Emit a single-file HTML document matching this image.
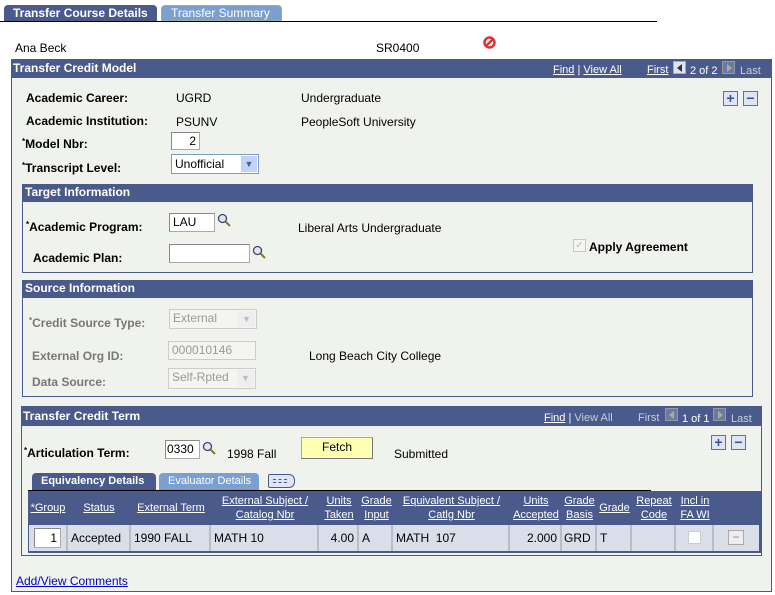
<!DOCTYPE html>
<html><head><style>
*{box-sizing:border-box;margin:0;padding:0}
body{width:775px;height:595px;background:#fff;font-family:"Liberation Sans",Arial,sans-serif;font-size:12px;color:#000;position:relative;overflow:hidden}
.a{position:absolute;white-space:nowrap}
.b{font-weight:bold}
.hd{background:#4a5a8b;color:#fff;font-weight:bold}
.box{position:absolute;border:1px solid #4a5a8b;background:#f0f2ee}
.in{position:absolute;background:#fff;border:1px solid #aaa;border-top-color:#888;border-left-color:#888;font-size:12px;padding:1px 3px}
.dis{color:#999;border-color:#ccc;background:#f4f4f0}
.lnk{color:#fff;text-decoration:underline;font-size:11px}
.pm{position:absolute;width:15px;height:15px;border:1px solid #5b6fb4;background:#dfe5f5;color:#3b4fa0;font-weight:bold;font-size:14px;line-height:12px;text-align:center}
.th{position:absolute;color:#fff;text-decoration:underline;font-size:11px;text-align:center;line-height:14px}
.td{position:absolute;top:525px;height:26px;background:#d9dee8;border-right:2px solid #b8bcc4;line-height:26px;padding:0 3px;font-size:12px}
</style></head><body>
<!-- tabs -->
<div class="a b" style="left:4px;top:5px;width:153px;height:17px;background:#4a5a8b;color:#fff;border-radius:4px 4px 0 0;padding:1px 0 0 9px">Transfer Course Details</div>
<div class="a" style="left:161px;top:5px;width:121px;height:16px;background:#7b9fcf;color:#fff;border-radius:4px 4px 0 0;border:1px solid #9aa;padding:0 0 0 9px">Transfer Summary</div>
<div class="a" style="left:0;top:21px;width:657px;height:1px;background:#000"></div>
<div class="a" style="left:15px;top:41px">Ana Beck</div>
<div class="a" style="left:376px;top:41px">SR0400</div>
<svg class="a" style="left:483px;top:36px" width="13" height="13"><circle cx="6.5" cy="6.5" r="5" fill="none" stroke="#d33" stroke-width="2.5"/><line x1="3" y1="10" x2="10" y2="3" stroke="#d33" stroke-width="2.5"/></svg>
<!-- main box -->
<div class="box" style="left:11px;top:59px;width:761px;height:533px"></div>
<div class="a hd" style="left:11px;top:59px;width:761px;height:19px;padding:2px 0 0 2px">Transfer Credit Model</div>
<div class="a" style="left:553px;top:64px;color:#fff;font-size:11px"><span style="text-decoration:underline">Find</span> | <span style="text-decoration:underline">View All</span></div>
<div class="a" style="left:647px;top:64px;color:#fff;font-size:11px"><span style="text-decoration:underline">First</span></div>
<div class="a" style="left:673px;top:61px;width:13px;height:13px;background:#dfe5f5;border:1px solid #aab"><div style="margin:2px 0 0 3px;width:0;height:0;border-top:4px solid transparent;border-bottom:4px solid transparent;border-right:5px solid #333"></div></div>
<div class="a" style="left:690px;top:65px;color:#fff;font-size:11px">2 of 2</div>
<div class="a" style="left:722px;top:61px;width:13px;height:13px;background:#6b7aa5;border:1px solid #999"><div style="margin:2px 0 0 4px;width:0;height:0;border-top:4px solid transparent;border-bottom:4px solid transparent;border-left:5px solid #aaa"></div></div>
<div class="a" style="left:740px;top:65px;color:#ccd;font-size:11px">Last</div>
<div class="pm" style="left:723px;top:91px">+</div><div class="pm" style="left:743px;top:91px">−</div>
<div class="a b" style="left:26px;top:91px">Academic Career:</div>
<div class="a" style="left:176px;top:91px">UGRD</div>
<div class="a" style="left:301px;top:91px">Undergraduate</div>
<div class="a b" style="left:26px;top:114px">Academic Institution:</div>
<div class="a" style="left:176px;top:115px">PSUNV</div>
<div class="a" style="left:301px;top:115px">PeopleSoft University</div>
<div class="a b" style="left:22px;top:137px"><span style="font-size:8px;vertical-align:top">*</span>Model Nbr:</div>
<div class="in" style="left:171px;top:132px;width:29px;height:18px;text-align:right">2</div>
<div class="a b" style="left:22px;top:161px"><span style="font-size:8px;vertical-align:top">*</span>Transcript Level:</div>
<div class="in" style="left:171px;top:154px;width:88px;height:20px;border-color:#7f9db9;padding-top:2px">Unofficial<div style="position:absolute;right:1px;top:1px;width:16px;height:16px;background:#c1d3fb;color:#4d6185;font-size:9px;text-align:center;line-height:16px">&#9660;</div></div>
<!-- target -->
<div class="box" style="left:22px;top:184px;width:731px;height:89px"></div>
<div class="a hd" style="left:22px;top:184px;width:731px;height:18px;padding:1px 0 0 3px">Target Information</div>
<div class="a b" style="left:26px;top:220px"><span style="font-size:8px;vertical-align:top">*</span>Academic Program:</div>
<div class="in" style="left:169px;top:213px;width:46px;height:19px">LAU</div>
<svg class="a" style="left:217px;top:213px" width="14" height="14"><circle cx="5.5" cy="5.5" r="4" fill="#dde8f5" stroke="#446" stroke-width="1.3"/><line x1="8.5" y1="8.5" x2="13" y2="13" stroke="#873" stroke-width="2"/></svg>
<div class="a" style="left:298px;top:221px">Liberal Arts Undergraduate</div>
<div class="a b" style="left:33px;top:251px">Academic Plan:</div>
<div class="in" style="left:169px;top:244px;width:81px;height:19px"></div>
<svg class="a" style="left:252px;top:245px" width="14" height="14"><circle cx="5.5" cy="5.5" r="4" fill="#dde8f5" stroke="#446" stroke-width="1.3"/><line x1="8.5" y1="8.5" x2="13" y2="13" stroke="#873" stroke-width="2"/></svg>
<div class="a" style="left:573px;top:239px;width:13px;height:13px;border:1px solid #c8c8c0;background:#f4f4f0;color:#bbb;font-size:10px;line-height:11px;text-align:center">✓</div>
<div class="a b" style="left:589px;top:240px">Apply Agreement</div>
<!-- source -->
<div class="box" style="left:22px;top:280px;width:731px;height:117px"></div>
<div class="a hd" style="left:22px;top:280px;width:731px;height:18px;padding:1px 0 0 3px">Source Information</div>
<div class="a b" style="left:29px;top:316px;color:#777"><span style="font-size:8px;vertical-align:top">*</span>Credit Source Type:</div>
<div class="in dis" style="left:169px;top:309px;width:88px;height:20px">External<div style="position:absolute;right:1px;top:1px;width:17px;height:16px;background:#eee;color:#bbb;font-size:9px;text-align:center;line-height:16px">&#9660;</div></div>
<div class="a b" style="left:32px;top:349px;color:#777">External Org ID:</div>
<div class="in dis" style="left:168px;top:341px;width:88px;height:19px">000010146</div>
<div class="a" style="left:309px;top:349px">Long Beach City College</div>
<div class="a b" style="left:32px;top:375px;color:#777">Data Source:</div>
<div class="in dis" style="left:168px;top:368px;width:88px;height:21px">Self-Rpted<div style="position:absolute;right:1px;top:1px;width:17px;height:17px;background:#eee;color:#bbb;font-size:9px;text-align:center;line-height:16px">&#9660;</div></div>
<!-- term -->
<div class="box" style="left:21px;top:406px;width:741px;height:150px"></div>
<div class="a hd" style="left:21px;top:406px;width:741px;height:20px;padding:3px 0 0 2px">Transfer Credit Term</div>
<div class="a" style="left:544px;top:412px;color:#fff;font-size:11px"><span style="text-decoration:underline">Find</span> | <span style="color:#ccd">View All</span></div>
<div class="a" style="left:638px;top:412px;color:#ccd;font-size:11px">First</div>
<div class="a" style="left:665px;top:408px;width:13px;height:13px;background:#6b7aa5;border:1px solid #999"><div style="margin:2px 0 0 3px;width:0;height:0;border-top:4px solid transparent;border-bottom:4px solid transparent;border-right:5px solid #aaa"></div></div>
<div class="a" style="left:682px;top:413px;color:#fff;font-size:11px">1 of 1</div>
<div class="a" style="left:713px;top:408px;width:13px;height:13px;background:#6b7aa5;border:1px solid #999"><div style="margin:2px 0 0 4px;width:0;height:0;border-top:4px solid transparent;border-bottom:4px solid transparent;border-left:5px solid #aaa"></div></div>
<div class="a" style="left:731px;top:413px;color:#ccd;font-size:11px">Last</div>
<div class="pm" style="left:711px;top:435px">+</div><div class="pm" style="left:731px;top:435px">−</div>
<div class="a b" style="left:24px;top:446px"><span style="font-size:8px;vertical-align:top">*</span>Articulation Term:</div>
<div class="in" style="left:165px;top:440px;width:35px;height:19px;padding:1px 1px">0330</div>
<svg class="a" style="left:202px;top:441px" width="14" height="14"><circle cx="5.5" cy="5.5" r="4" fill="#dde8f5" stroke="#446" stroke-width="1.3"/><line x1="8.5" y1="8.5" x2="13" y2="13" stroke="#873" stroke-width="2"/></svg>
<div class="a" style="left:227px;top:447px">1998 Fall</div>
<div class="a" style="left:301px;top:437px;width:72px;height:22px;background:#ffffb3;border:1px solid #aaa;border-right-color:#777;border-bottom-color:#777;text-align:center;line-height:19px">Fetch</div>
<div class="a" style="left:394px;top:447px">Submitted</div>
<!-- sub tabs -->
<div class="a b" style="left:32px;top:473px;width:124px;height:18px;background:#4a5a8b;color:#fff;border-radius:4px 4px 0 0;font-size:11px;padding:2px 0 0 9px">Equivalency Details</div>
<div class="a" style="left:159px;top:473px;width:100px;height:17px;background:#7b9fcf;color:#fff;border-radius:4px 4px 0 0;font-size:11px;padding:2px 0 0 9px">Evaluator Details</div>
<div class="a" style="left:268px;top:474px;width:27px;height:14px;border:1px solid #4a5a8b;border-radius:2px 6px 6px 2px;background:#dfe5f5"><div style="margin:4px 0 0 4px;width:14px;height:4px;border-top:1px dashed #4a5a8b;border-bottom:1px dashed #4a5a8b"></div></div>
<div class="a" style="left:28px;top:490px;width:243px;height:1px;background:#000"></div>
<div class="a" style="left:28px;top:490px;width:623px;height:1px;background:#000"></div>
<!-- grid -->
<div class="a" style="left:28px;top:491px;width:734px;height:62px;background:#4a5a8b"></div>
<div class="th" style="left:29px;top:501px;width:38px">*Group</div>
<div class="th" style="left:68px;top:501px;width:62px">Status</div>
<div class="th" style="left:131px;top:501px;width:80px">External Term</div>
<div class="th" style="left:211px;top:494px;width:108px">External Subject /<br>Catalog Nbr</div>
<div class="th" style="left:319px;top:494px;width:40px">Units<br>Taken</div>
<div class="th" style="left:359px;top:494px;width:35px">Grade<br>Input</div>
<div class="th" style="left:393px;top:494px;width:117px">Equivalent Subject /<br>Catlg Nbr</div>
<div class="th" style="left:510px;top:494px;width:52px">Units<br>Accepted</div>
<div class="th" style="left:562px;top:494px;width:35px">Grade<br>Basis</div>
<div class="th" style="left:597px;top:501px;width:35px">Grade</div>
<div class="th" style="left:632px;top:494px;width:44px">Repeat<br>Code</div>
<div class="th" style="left:676px;top:494px;width:38px">Incl in<br>FA WI</div>
<div class="td" style="left:29px;width:39px"><div class="in" style="left:5px;top:3px;width:27px;height:20px;line-height:16px;text-align:right">1</div></div>
<div class="td" style="left:68px;width:63px">Accepted</div>
<div class="td" style="left:131px;width:80px">1990 FALL</div>
<div class="td" style="left:211px;width:108px">MATH 10</div>
<div class="td" style="left:319px;width:40px;text-align:right">4.00</div>
<div class="td" style="left:359px;width:34px">A</div>
<div class="td" style="left:393px;width:117px">MATH &nbsp;107</div>
<div class="td" style="left:510px;width:52px;text-align:right">2.000</div>
<div class="td" style="left:562px;width:35px;padding:0 2px">GRD</div>
<div class="td" style="left:597px;width:35px">T</div>
<div class="td" style="left:632px;width:44px"></div>
<div class="td" style="left:676px;width:38px"><div class="a" style="left:12px;top:6px;width:13px;height:13px;background:#fff;border:1px solid #ccc"></div></div>
<div class="td" style="left:714px;width:45px;border-right:none"><div class="a" style="left:14px;top:5px;width:16px;height:15px;border:1px solid #aaa;background:#eee;color:#888;text-align:center;line-height:12px">−</div></div>
<div class="a" style="left:16px;top:574px;color:#00c;text-decoration:underline">Add/View Comments</div>
</body></html>
